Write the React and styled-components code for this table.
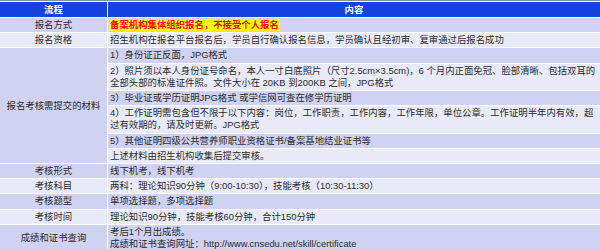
import React from 'react'
import styled, { createGlobalStyle } from 'styled-components'

const GlobalStyle = createGlobalStyle`
    html, body {
        margin: 0;
        padding: 0;
        background: #ffffff;
    }
`;

const Frame = styled.div`
    width: 600px;
    height: 249px;
    overflow: hidden;
    border-top: 1px solid #8e8e8e;
    padding-top: 1px;
    box-sizing: border-box;
    background: #ffffff;
    font-family: "Liberation Sans", "Noto Sans CJK SC", sans-serif;
    font-size: 9.4px;
    color: #2a2a2a;
`;

const Table = styled.div`
    display: grid;
    grid-template-columns: 107px 1fr;
    gap: 1px;
    background: #ffffff;
`;

const HeadCell = styled.div`
    background: #1443e0;
    color: #ffffff;
    font-weight: bold;
    text-align: center;
    line-height: 13px;
    padding: 1px 2px;
`;

const Label = styled.div`
    background: ${({tone}) => (tone === 'dark' ? '#cfd2f1' : '#e8eaf8')};
    grid-row: ${({span}) => (span ? `span ${span}` : 'auto')};
    display: flex;
    align-items: center;
    justify-content: center;
    text-align: center;
    line-height: 12.2px;
    padding: 1px 2px;
    white-space: nowrap;
`;

const Content = styled.div`
    background: ${({tone}) => (tone === 'dark' ? '#cfd2f1' : '#e8eaf8')};
    line-height: 12.2px;
    padding: 1px 2px 1px 2px;
    white-space: nowrap;
`;

const Marked = styled.span`
    display: inline-block;
    background: #ffff00;
    color: #ff0000;
    font-weight: bold;
    margin-left: -1px;
    padding: 0 1px;
`;

export default function App() {
    return (
        <>
            <GlobalStyle />
            <Frame>
                <Table>
                    <HeadCell>流程</HeadCell>
                    <HeadCell>内容</HeadCell>

                    <Label tone="dark">报名方式</Label>
                    <Content tone="dark"><Marked>备案机构集体组织报名，不接受个人报名</Marked></Content>

                    <Label tone="light">报名资格</Label>
                    <Content tone="light">招生机构在报名平台报名后，学员自行确认报名信息，学员确认且经初审、复审通过后报名成功</Content>

                    <Label tone="dark" span={6}>报名考核需提交的材料</Label>
                    <Content tone="dark">1）身份证正反面，JPG格式</Content>
                    <Content tone="light">
                        2）照片须以本人身份证号命名，本人一寸白底照片（尺寸2.5cm×3.5cm)，6 个月内正面免冠、脸部清晰、包括双耳的<br />
                        全部头部的标准证件照。文件大小在 20KB 到200KB 之间，JPG格式
                    </Content>
                    <Content tone="dark">3）毕业证或学历证明JPG格式 或学信网可查在修学历证明</Content>
                    <Content tone="light">
                        4）工作证明需包含但不限于以下内容：岗位，工作职责，工作内容，工作年限，单位公章。工作证明半年内有效，超<br />
                        过有效期的，请及时更新。JPG格式
                    </Content>
                    <Content tone="dark">5）其他证明四级公共营养师职业资格证书/备案基地结业证书等</Content>
                    <Content tone="light">上述材料由招生机构收集后提交审核。</Content>

                    <Label tone="dark">考核形式</Label>
                    <Content tone="dark">线下机考，线下机考</Content>

                    <Label tone="light">考核科目</Label>
                    <Content tone="light">两科：理论知识90分钟（9:00-10:30），技能考核（10:30-11:30）</Content>

                    <Label tone="dark">考核题型</Label>
                    <Content tone="dark">单项选择题，多项选择题</Content>

                    <Label tone="light">考核时间</Label>
                    <Content tone="light">理论知识90分钟，技能考核60分钟，合计150分钟</Content>

                    <Label tone="dark">成绩和证书查询</Label>
                    <Content tone="dark">
                        考后1个月出成绩。<br />
                        成绩和证书查询网址：http://www.cnsedu.net/skill/certificate
                    </Content>
                </Table>
            </Frame>
        </>
    )
}
